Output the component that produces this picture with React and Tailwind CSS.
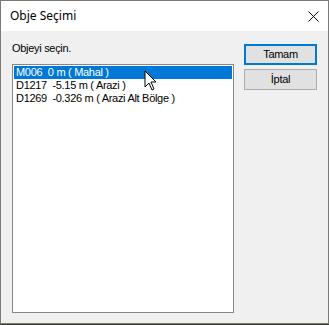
const items = [
    { id: 'M006', text: 'M006  0 m ( Mahal )', selected: true },
    { id: 'D1217', text: 'D1217  -5.15 m ( Arazi )' },
    { id: 'D1269', text: 'D1269  -0.326 m ( Arazi Alt Bölge )' },
];

export default function App() {
    return (
        <div className="w-[329px] h-[325px] bg-[#3b3d2c]">
            <div className="relative w-[329px] h-[324px] border border-[#7a7a7a] flex flex-col bg-[#f0f0f0]">
                {/* title bar */}
                <div className="h-[30px] bg-white flex items-center justify-between pl-[9px] pr-[9px]">
                    <span className="text-[12px] text-black font-['Noto_Sans',sans-serif] leading-none">Obje Seçimi</span>
                    <svg className="w-[11px] h-[11px]" viewBox="0 0 11 11" fill="none" stroke="#000" strokeWidth="1">
                        <path d="M0.5 0.5 L10.5 10.5 M10.5 0.5 L0.5 10.5" />
                    </svg>
                </div>

                {/* body */}
                <div className="flex-1 flex font-['Liberation_Sans',Arial,sans-serif] text-[11px] tracking-[-0.3px] text-black">
                    <div className="pl-[11px] pt-[11px] flex flex-col">
                        <div className="h-[13px] leading-[13px]">Objeyi seçin.</div>
                        <div className="mt-[9px] w-[222px] h-[249px] border border-[#828790] bg-white p-px">
                            {items.map((it) => (
                                <div
                                    key={it.id}
                                    className={`h-[13px] leading-[13px] pl-[2px] whitespace-pre ${it.selected ? 'bg-[#0078d7] text-white' : ''}`}
                                >
                                    {it.text}
                                </div>
                            ))}
                        </div>
                    </div>
                    <div className="ml-[10px] pt-[13px] flex flex-col gap-[4px]">
                        <button className="w-[73px] h-[21px] border-2 border-[#0078d7] bg-[#e1e1e1] text-[11px] leading-none">Tamam</button>
                        <button className="w-[73px] h-[21px] border border-[#adadad] bg-[#e1e1e1] text-[11px] leading-none">İptal</button>
                    </div>
                </div>

                {/* mouse pointer */}
                <svg className="absolute left-[143px] top-[69px] w-[13px] h-[21px]" viewBox="0 0 13 21">
                    <path d="M1 1 L1 17 L5 13 L8 20 L10 19 L7 12 L12 12 Z" fill="#fff" stroke="#000" strokeWidth="1" strokeLinejoin="miter" />
                </svg>
            </div>
        </div>
    );
}
